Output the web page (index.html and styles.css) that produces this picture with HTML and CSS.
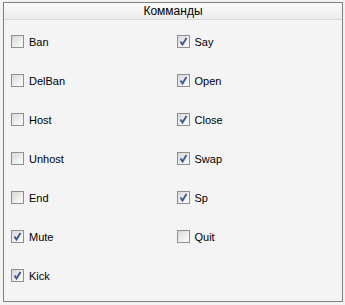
FILE: index.html
```html
<!DOCTYPE html>
<html lang="ru">
<head>
    <meta charset="UTF-8">
    <title>Комманды</title>
    <link rel="stylesheet" href="styles.css">
</head>
<body>

    <!-- Commands group -->
    <div class="group">
        <div class="group-title">Комманды</div>

        <div class="group-body">
            <div class="column">
                <label class="check"><span class="box"></span>Ban</label>
                <label class="check"><span class="box"></span>DelBan</label>
                <label class="check"><span class="box"></span>Host</label>
                <label class="check"><span class="box"></span>Unhost</label>
                <label class="check"><span class="box"></span>End</label>
                <label class="check"><span class="box checked"><svg viewBox="0 0 11 11"><path d="M2.5 5.5 L4.5 8.5 L8.5 2"/></svg></span>Mute</label>
                <label class="check"><span class="box checked"><svg viewBox="0 0 11 11"><path d="M2.5 5.5 L4.5 8.5 L8.5 2"/></svg></span>Kick</label>
            </div>
            <div class="column">
                <label class="check"><span class="box checked"><svg viewBox="0 0 11 11"><path d="M2.5 5.5 L4.5 8.5 L8.5 2"/></svg></span>Say</label>
                <label class="check"><span class="box checked"><svg viewBox="0 0 11 11"><path d="M2.5 5.5 L4.5 8.5 L8.5 2"/></svg></span>Open</label>
                <label class="check"><span class="box checked"><svg viewBox="0 0 11 11"><path d="M2.5 5.5 L4.5 8.5 L8.5 2"/></svg></span>Close</label>
                <label class="check"><span class="box checked"><svg viewBox="0 0 11 11"><path d="M2.5 5.5 L4.5 8.5 L8.5 2"/></svg></span>Swap</label>
                <label class="check"><span class="box checked"><svg viewBox="0 0 11 11"><path d="M2.5 5.5 L4.5 8.5 L8.5 2"/></svg></span>Sp</label>
                <label class="check"><span class="box"></span>Quit</label>
            </div>
        </div>
    </div>

</body>
</html>
```

FILE: styles.css
```css
body {
    margin: 0;
    padding: 2px 3px;
    background-color: #f3f3f3;
    font-family: "Liberation Sans", Arial, sans-serif;
    font-size: 11px;
    color: #000;
}

/* Group box */
.group {
    width: 338px;
    height: 298px;
    border: 1px solid #7f7f7f;
    background-color: #f4f4f4;
}

.group-title {
    height: 16px;
    line-height: 16px;
    text-align: center;
    font-size: 12px;
    background: linear-gradient(#fbfbfb, #ececec);
    border-bottom: 1px solid #d6d6d6;
}

.group-body {
    display: flex;
    padding: 15px 0 0 7px;
}

.column {
    display: flex;
    flex-direction: column;
    gap: 26px;
    width: 166px;
}

/* Checkbox rows */
.check {
    display: flex;
    align-items: center;
    height: 13px;
}

.box {
    width: 11px;
    height: 11px;
    margin-right: 5px;
    border: 1px solid #8e8f8f;
    background: linear-gradient(135deg, #d8d8d8, #f7f7f7 80%);
}

.box svg {
    display: block;
    width: 11px;
    height: 11px;
}

.box path {
    fill: none;
    stroke: #3b5597;
    stroke-width: 1.8;
}
```
